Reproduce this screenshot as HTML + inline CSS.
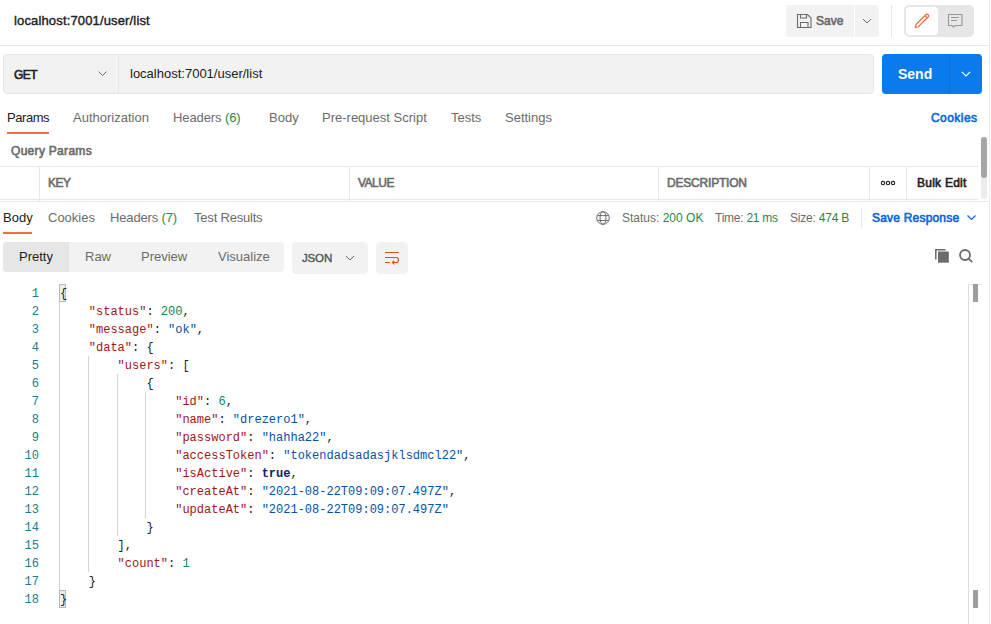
<!DOCTYPE html>
<html><head><meta charset="utf-8">
<style>
*{box-sizing:border-box;margin:0;padding:0}
html,body{width:991px;height:624px;overflow:hidden;background:#fff;font-family:"Liberation Sans",sans-serif;color:#212121}
.abs{position:absolute}
.t{position:absolute;white-space:nowrap;line-height:1}
.g{color:#6b6b6b}
.ok{color:#1a8a4e}
.ln{position:absolute;left:0;width:39px;height:18px;line-height:18px;text-align:right;font-family:"Liberation Mono",monospace;font-size:12px;color:#237893}
.cl{position:absolute;left:60px;height:18px;line-height:18px;white-space:pre;font-family:"Liberation Mono",monospace;font-size:12px;color:#212121}
.ig{position:absolute;width:1px;background:#d3d3d3}
.hl{position:absolute;background:#e8e8e8}
.m{-webkit-text-stroke-width:0.6px}
svg{position:absolute;overflow:visible}
</style></head><body>
<!-- ===== header ===== -->
<div class="t" style="left:14px;top:14px;font-size:13px;letter-spacing:0.15px;-webkit-text-stroke:0.4px #212121;color:#212121">localhost:7001/user/list</div>
<div class="abs" style="left:786px;top:5px;width:68px;height:32px;background:#f2f2f2;border-radius:4px 0 0 4px"></div>
<svg style="left:786px;top:5px" width="68" height="32" viewBox="0 0 68 32"><path d="M11.5 9.5h10l3.5 3.5v9.5h-13.5z M14.5 9.5v3.5h6v-3.5 M14.5 22.5v-5h7.5v5" fill="none" stroke="#6b6b6b" stroke-width="1.1"/></svg>
<div class="t m" style="left:816px;top:15px;font-size:12px;color:#6b6b6b">Save</div>
<div class="abs" style="left:855px;top:5px;width:24px;height:32px;background:#f2f2f2;border-radius:0 4px 4px 0"></div>
<svg style="left:855px;top:5px" width="24" height="32" viewBox="0 0 24 32"><path d="M8 14l4 4 4-4" fill="none" stroke="#6b6b6b" stroke-width="1"/></svg>
<div class="abs" style="left:891px;top:5px;width:1px;height:32px;background:#e6e6e6"></div>
<div class="abs" style="left:904px;top:5px;width:70px;height:32px;background:#e6e6e6;border-radius:5px"></div>
<div class="abs" style="left:906px;top:7px;width:32px;height:28px;background:#fff;border-radius:4px"></div>
<svg style="left:906px;top:7px" width="32" height="28" viewBox="0 0 32 28"><path d="M9.3 20.5l0.7-3 10-10a1.2 1.2 0 0 1 1.8 0l0.5 0.5a1.2 1.2 0 0 1 0 1.8l-10 10z M18.6 8.4l2.3 2.3" fill="none" stroke="#f26b3a" stroke-width="1.25"/></svg>
<svg style="left:938px;top:7px" width="36" height="28" viewBox="0 0 36 28"><path d="M10.5 7.5h13.5v11h-7l-1.5 1.5-1.5-1.5h-3.5z M13 10.5h8 M13 13.5h6" fill="none" stroke="#979797" stroke-width="1.1"/></svg>
<div class="hl" style="left:0;top:45px;width:989px;height:1px"></div>
<div class="abs" style="left:989px;top:0;width:1px;height:624px;background:#ebebeb"></div>

<!-- ===== request bar ===== -->
<div class="abs" style="left:3px;top:54px;width:871px;height:40px;background:#f2f2f2;border:1px solid #e6e6e6;border-radius:4px"></div>
<div class="abs" style="left:118px;top:55px;width:1px;height:38px;background:#e6e6e6"></div>
<div class="t m" style="left:14px;top:69px;font-size:12px;letter-spacing:-0.6px;color:#212121">GET</div>
<svg style="left:90px;top:54px" width="28" height="40" viewBox="0 0 28 40"><path d="M8.5 17.5l4 4 4-4" fill="none" stroke="#6b6b6b" stroke-width="1"/></svg>
<div class="t" style="left:130px;top:67px;font-size:13px;color:#212121">localhost:7001/user/list</div>
<div class="abs" style="left:882px;top:54px;width:100px;height:40px;background:#097bed;border-radius:4px"></div>
<div class="abs" style="left:949px;top:54px;width:1px;height:40px;background:#0a6fd6"></div>
<div class="t" style="left:898px;top:67px;font-size:14px;font-weight:bold;color:#fff">Send</div>
<svg style="left:950px;top:54px" width="32" height="40" viewBox="0 0 32 40"><path d="M11.8 17.8l4.2 4.2 4.2-4.2" fill="none" stroke="#fff" stroke-width="1.2"/></svg>

<!-- ===== request tabs ===== -->
<div class="t" style="left:7px;top:111px;font-size:13px;letter-spacing:-0.45px;color:#212121">Params</div>
<div class="abs" style="left:7px;top:132px;width:42px;height:2px;background:#f26b3a"></div>
<div class="t g" style="left:73px;top:111px;font-size:13px">Authorization</div>
<div class="t g" style="left:173px;top:111px;font-size:13px;letter-spacing:-0.1px">Headers <span class="ok">(6)</span></div>
<div class="t g" style="left:269px;top:111px;font-size:13px">Body</div>
<div class="t g" style="left:322px;top:111px;font-size:13px">Pre-request Script</div>
<div class="t g" style="left:451px;top:111px;font-size:13px">Tests</div>
<div class="t g" style="left:505px;top:111px;font-size:13px">Settings</div>
<div class="t m" style="left:931px;top:112px;font-size:12px;letter-spacing:0.45px;color:#0a64dc">Cookies</div>

<div class="t g m" style="left:11px;top:145px;font-size:12px;letter-spacing:0.3px">Query Params</div>

<!-- ===== params table ===== -->
<div class="hl" style="left:0;top:166px;width:978px;height:1px"></div>
<div class="hl" style="left:0;top:199px;width:978px;height:1px"></div>
<div class="hl" style="left:39px;top:167px;width:1px;height:34px"></div>
<div class="hl" style="left:349px;top:167px;width:1px;height:34px"></div>
<div class="hl" style="left:658px;top:167px;width:1px;height:34px"></div>
<div class="hl" style="left:869px;top:167px;width:1px;height:34px"></div>
<div class="hl" style="left:906px;top:167px;width:1px;height:34px"></div>
<div class="t g m" style="left:48px;top:177px;font-size:12px;letter-spacing:-0.5px">KEY</div>
<div class="t g m" style="left:358px;top:177px;font-size:12px;letter-spacing:-0.5px">VALUE</div>
<div class="t g m" style="left:667px;top:177px;font-size:12px;letter-spacing:-0.2px">DESCRIPTION</div>
<svg style="left:870px;top:167px" width="36" height="32" viewBox="0 0 36 32"><g fill="none" stroke="#212121" stroke-width="1.1"><circle cx="13" cy="16.1" r="1.7"/><circle cx="18" cy="16.1" r="1.7"/><circle cx="23" cy="16.1" r="1.7"/></g></svg>
<div class="t m" style="left:917px;top:177px;font-size:12px;letter-spacing:0.25px;color:#212121">Bulk Edit</div>
<div class="abs" style="left:981px;top:137px;width:6px;height:62px;background:#ececec;border-radius:3px"></div>
<div class="abs" style="left:981px;top:137px;width:6px;height:41px;background:#a6a6a6;border-radius:3px"></div>
<div class="hl" style="left:0;top:201px;width:989px;height:1px"></div>

<!-- ===== response tabs ===== -->
<div class="t" style="left:3px;top:211px;font-size:13px;color:#212121">Body</div>
<div class="abs" style="left:3px;top:232px;width:29px;height:2px;background:#f26b3a"></div>
<div class="t g" style="left:48px;top:211px;font-size:13px">Cookies</div>
<div class="t g" style="left:110px;top:211px;font-size:13px;letter-spacing:-0.15px">Headers <span class="ok">(7)</span></div>
<div class="t g" style="left:194px;top:211px;font-size:13px;letter-spacing:-0.2px">Test Results</div>
<svg style="left:596px;top:211px" width="14" height="14" viewBox="0 0 14 14"><g fill="none" stroke="#6b6b6b" stroke-width="1"><circle cx="7" cy="7" r="6.3"/><ellipse cx="7" cy="7" rx="3" ry="6.3"/><path d="M1.2 4.6h11.6 M1.2 9.4h11.6"/></g></svg>
<div class="t g" style="left:622px;top:212px;font-size:12px">Status: <span class="ok">200 OK</span></div>
<div class="t g" style="left:715px;top:212px;font-size:12px;letter-spacing:-0.25px">Time: <span class="ok">21 ms</span></div>
<div class="t g" style="left:790px;top:212px;font-size:12px;letter-spacing:-0.2px">Size: <span class="ok">474 B</span></div>
<div class="hl" style="left:861px;top:208px;width:1px;height:20px"></div>
<div class="t m" style="left:872px;top:212px;font-size:12px;letter-spacing:0.2px;color:#0a64dc">Save Response</div>
<svg style="left:966px;top:212px" width="12" height="12" viewBox="0 0 12 12"><path d="M1.5 3.5l4 4 4-4" fill="none" stroke="#0a64dc" stroke-width="1.2"/></svg>

<!-- ===== toolbar ===== -->
<div class="abs" style="left:3px;top:242px;width:281px;height:30px;background:#f2f2f2;border-radius:4px"></div>
<div class="abs" style="left:3px;top:242px;width:66px;height:30px;background:#e6e6e6;border-radius:4px 0 0 4px"></div>
<div class="t" style="left:19px;top:250px;font-size:13px;color:#212121">Pretty</div>
<div class="t g" style="left:85px;top:250px;font-size:13px">Raw</div>
<div class="t g" style="left:141px;top:250px;font-size:13px">Preview</div>
<div class="t g" style="left:218px;top:250px;font-size:13px">Visualize</div>
<div class="abs" style="left:292px;top:242px;width:76px;height:32px;background:#f2f2f2;border-radius:4px"></div>
<div class="t" style="left:302px;top:253px;font-size:11.5px;letter-spacing:-0.15px;-webkit-text-stroke:0.4px #555;color:#555">JSON</div>
<svg style="left:340px;top:242px" width="20" height="32" viewBox="0 0 20 32"><path d="M6 14l4 4 4-4" fill="none" stroke="#6b6b6b" stroke-width="1"/></svg>
<div class="abs" style="left:376px;top:242px;width:32px;height:32px;background:#f2f2f2;border-radius:4px"></div>
<svg style="left:376px;top:242px" width="32" height="32" viewBox="0 0 32 32"><path d="M9 10.5h13.8 M9 15.5h11a2.5 2.5 0 0 1 0 5h-3.8 M18.3 18.6l-1.9 1.9 1.9 1.9 M9 20.5h4.8" fill="none" stroke="#dd4f1a" stroke-width="1.2"/></svg>
<svg style="left:935px;top:249px" width="14" height="14" viewBox="0 0 14 14"><path d="M0.8 10.5v-9.7h9.8" fill="none" stroke="#6b6b6b" stroke-width="1.5"/><rect x="3" y="2.5" width="10.8" height="11.2" fill="#6b6b6b"/></svg>
<svg style="left:958px;top:248px" width="16" height="16" viewBox="0 0 16 16"><circle cx="7" cy="7" r="5" fill="none" stroke="#6b6b6b" stroke-width="1.8"/><path d="M10.6 10.6l3.6 3.6" stroke="#6b6b6b" stroke-width="1.8"/></svg>

<!-- ===== code editor ===== -->
<div class="abs" style="left:59px;top:284px;width:7px;height:18px;border:1px solid #b9b9b9;background:#eaf0ea"></div>
<div class="abs" style="left:59px;top:590px;width:7px;height:18px;border:1px solid #b9b9b9;background:#eaf0ea"></div>
<div class="ig" style="left:59px;top:302px;height:288px"></div>
<div class="ig" style="left:88px;top:356px;height:216px"></div>
<div class="ig" style="left:117px;top:374px;height:162px"></div>
<div class="ig" style="left:145px;top:392px;height:126px"></div>
<div class="ln" style="top:285px">1</div>
<div class="cl" style="top:285px">{</div>
<div class="ln" style="top:303px">2</div>
<div class="cl" style="top:303px">&nbsp;&nbsp;&nbsp;&nbsp;<span style="color:#a31515">"status"</span>: <span style="color:#098658">200</span>,</div>
<div class="ln" style="top:321px">3</div>
<div class="cl" style="top:321px">&nbsp;&nbsp;&nbsp;&nbsp;<span style="color:#a31515">"message"</span>: <span style="color:#0451a5">"ok"</span>,</div>
<div class="ln" style="top:339px">4</div>
<div class="cl" style="top:339px">&nbsp;&nbsp;&nbsp;&nbsp;<span style="color:#a31515">"data"</span>: {</div>
<div class="ln" style="top:357px">5</div>
<div class="cl" style="top:357px">&nbsp;&nbsp;&nbsp;&nbsp;&nbsp;&nbsp;&nbsp;&nbsp;<span style="color:#a31515">"users"</span>: [</div>
<div class="ln" style="top:375px">6</div>
<div class="cl" style="top:375px">&nbsp;&nbsp;&nbsp;&nbsp;&nbsp;&nbsp;&nbsp;&nbsp;&nbsp;&nbsp;&nbsp;&nbsp;{</div>
<div class="ln" style="top:393px">7</div>
<div class="cl" style="top:393px">&nbsp;&nbsp;&nbsp;&nbsp;&nbsp;&nbsp;&nbsp;&nbsp;&nbsp;&nbsp;&nbsp;&nbsp;&nbsp;&nbsp;&nbsp;&nbsp;<span style="color:#a31515">"id"</span>: <span style="color:#098658">6</span>,</div>
<div class="ln" style="top:411px">8</div>
<div class="cl" style="top:411px">&nbsp;&nbsp;&nbsp;&nbsp;&nbsp;&nbsp;&nbsp;&nbsp;&nbsp;&nbsp;&nbsp;&nbsp;&nbsp;&nbsp;&nbsp;&nbsp;<span style="color:#a31515">"name"</span>: <span style="color:#0451a5">"drezero1"</span>,</div>
<div class="ln" style="top:429px">9</div>
<div class="cl" style="top:429px">&nbsp;&nbsp;&nbsp;&nbsp;&nbsp;&nbsp;&nbsp;&nbsp;&nbsp;&nbsp;&nbsp;&nbsp;&nbsp;&nbsp;&nbsp;&nbsp;<span style="color:#a31515">"password"</span>: <span style="color:#0451a5">"hahha22"</span>,</div>
<div class="ln" style="top:447px">10</div>
<div class="cl" style="top:447px">&nbsp;&nbsp;&nbsp;&nbsp;&nbsp;&nbsp;&nbsp;&nbsp;&nbsp;&nbsp;&nbsp;&nbsp;&nbsp;&nbsp;&nbsp;&nbsp;<span style="color:#a31515">"accessToken"</span>: <span style="color:#0451a5">"tokendadsadasjklsdmcl22"</span>,</div>
<div class="ln" style="top:465px">11</div>
<div class="cl" style="top:465px">&nbsp;&nbsp;&nbsp;&nbsp;&nbsp;&nbsp;&nbsp;&nbsp;&nbsp;&nbsp;&nbsp;&nbsp;&nbsp;&nbsp;&nbsp;&nbsp;<span style="color:#a31515">"isActive"</span>: <span style="color:#0b216f;font-weight:bold">true</span>,</div>
<div class="ln" style="top:483px">12</div>
<div class="cl" style="top:483px">&nbsp;&nbsp;&nbsp;&nbsp;&nbsp;&nbsp;&nbsp;&nbsp;&nbsp;&nbsp;&nbsp;&nbsp;&nbsp;&nbsp;&nbsp;&nbsp;<span style="color:#a31515">"createAt"</span>: <span style="color:#0451a5">"2021-08-22T09:09:07.497Z"</span>,</div>
<div class="ln" style="top:501px">13</div>
<div class="cl" style="top:501px">&nbsp;&nbsp;&nbsp;&nbsp;&nbsp;&nbsp;&nbsp;&nbsp;&nbsp;&nbsp;&nbsp;&nbsp;&nbsp;&nbsp;&nbsp;&nbsp;<span style="color:#a31515">"updateAt"</span>: <span style="color:#0451a5">"2021-08-22T09:09:07.497Z"</span></div>
<div class="ln" style="top:519px">14</div>
<div class="cl" style="top:519px">&nbsp;&nbsp;&nbsp;&nbsp;&nbsp;&nbsp;&nbsp;&nbsp;&nbsp;&nbsp;&nbsp;&nbsp;}</div>
<div class="ln" style="top:537px">15</div>
<div class="cl" style="top:537px">&nbsp;&nbsp;&nbsp;&nbsp;&nbsp;&nbsp;&nbsp;&nbsp;],</div>
<div class="ln" style="top:555px">16</div>
<div class="cl" style="top:555px">&nbsp;&nbsp;&nbsp;&nbsp;&nbsp;&nbsp;&nbsp;&nbsp;<span style="color:#a31515">"count"</span>: <span style="color:#098658">1</span></div>
<div class="ln" style="top:573px">17</div>
<div class="cl" style="top:573px">&nbsp;&nbsp;&nbsp;&nbsp;}</div>
<div class="ln" style="top:591px">18</div>
<div class="cl" style="top:591px">}</div>

<div class="abs" style="left:968px;top:284px;width:1px;height:340px;background:#dcdcdc"></div>
<div class="abs" style="left:968px;top:284px;width:14px;height:1px;background:#e6e6e6"></div>
<div class="abs" style="left:973px;top:284px;width:5px;height:18px;background:#9e9e9e"></div>
<div class="abs" style="left:973px;top:590px;width:5px;height:18px;background:#9e9e9e"></div>
</body></html>
